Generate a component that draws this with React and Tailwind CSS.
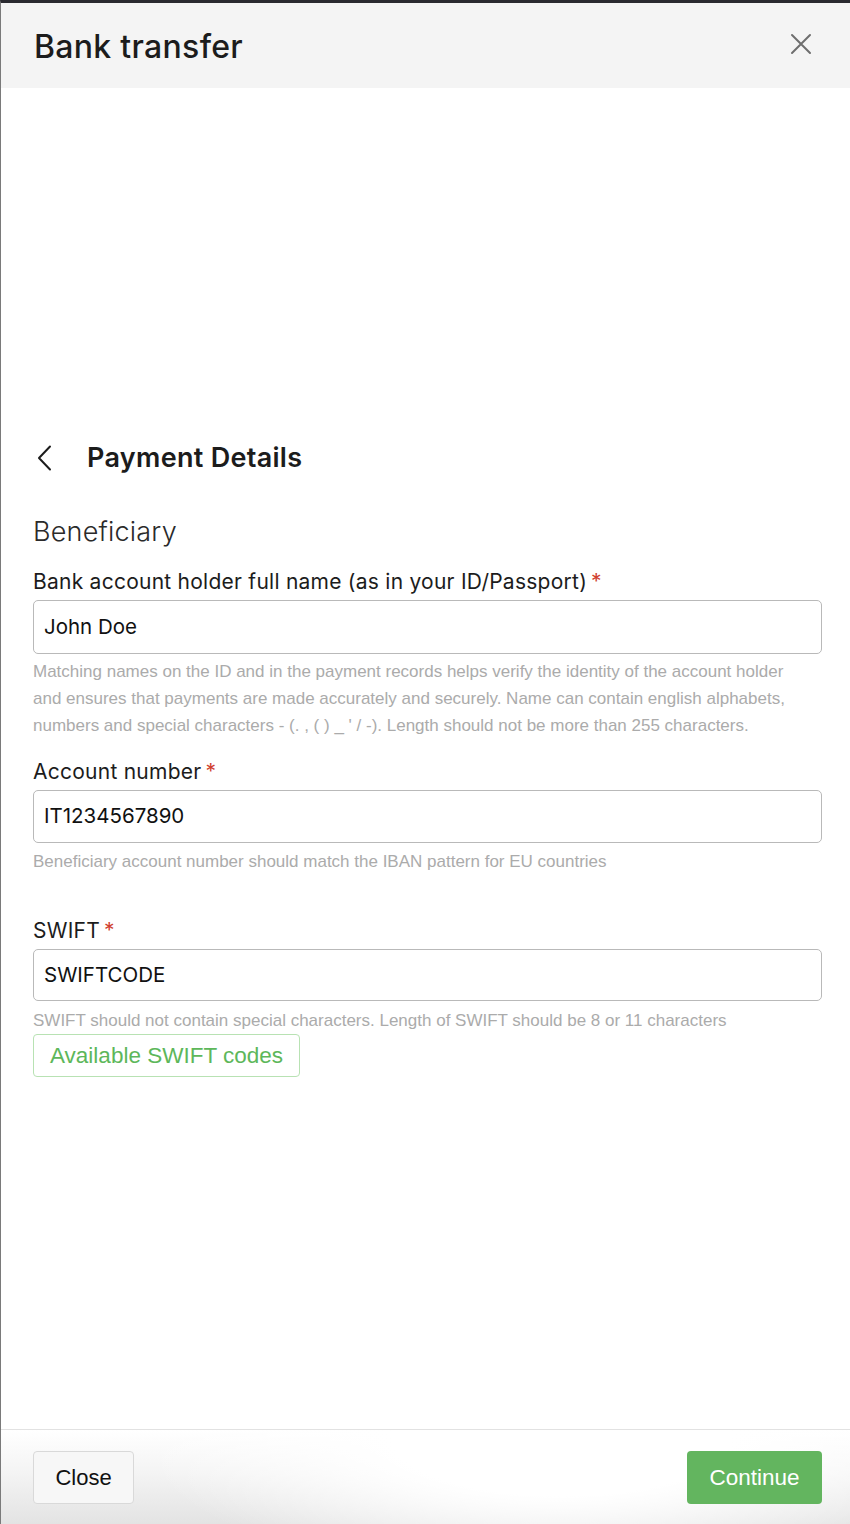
import React from "react";

const font = { fontFamily: "Inter, 'Noto Sans', sans-serif" };
const lib = { fontFamily: "'Liberation Sans', Arial, sans-serif" };

function Label({ children }) {
  return (
    <div className="text-[21px] leading-[28px] tracking-[0.25px] text-[#1c1c1c]">
      {children}
      <span className="text-[#d0402f] ml-[4px]">*</span>
    </div>
  );
}

function Input({ value, h }) {
  return (
    <div
      className={`mt-[4px] ${h} w-full rounded-[5px] border border-[#b9b9b9] bg-white flex items-center px-[10px] text-[20.5px] text-[#111]`}
      style={font}
    >
      {value}
    </div>
  );
}

function Helper({ children, className = "" }) {
  return (
    <div className={`text-[17px] leading-[27px] text-[#ababab] ${className}`} style={lib}>
      {children}
    </div>
  );
}

export default function App() {
  return (
    <div
      className="w-[850px] h-[1524px] flex flex-col bg-white border-t-[3px] border-t-[#2a2a30] border-l border-l-[#7a7a7a] overflow-hidden"
      style={font}
    >
      <header className="h-[85px] shrink-0 bg-[#f4f4f4] flex items-center justify-between pl-[33px] pr-[38px]">
        <h1 className="text-[32px] font-medium text-[#1c1c1c] tracking-[0.3px] pt-[2px]">Bank transfer</h1>
        <svg width="22" height="22" viewBox="0 0 22 22" className="mt-[-4px]">
          <path d="M2 2 L20 20 M20 2 L2 20" stroke="#6e6e6e" strokeWidth="2" strokeLinecap="round" />
        </svg>
      </header>

      <main className="flex-1 pl-[32px] pr-[28px] pt-[352px]">
        <div className="flex items-center h-[36px]">
          <svg width="16" height="26" viewBox="0 0 16 26" className="ml-[4px]">
            <path d="M13 1.5 L2 13 L13 24.5" stroke="#1c1c1c" strokeWidth="2" fill="none" strokeLinecap="round" strokeLinejoin="round" />
          </svg>
          <h2 className="ml-[34px] text-[27px] font-semibold tracking-[0.3px] text-[#1c1c1c]">Payment Details</h2>
        </div>

        <div className="mt-[38px] text-[27px] leading-[36px] tracking-[0.2px] text-[#2a2a2a] font-light">Beneficiary</div>

        <div className="mt-[18px]">
          <Label>Bank account holder full name (as in your ID/Passport)</Label>
          <Input value="John Doe" h="h-[54px]" />
          <Helper className="mt-[4px] max-w-[768px]">
            Matching names on the ID and in the payment records helps verify the identity of the account holder and ensures that payments are made accurately and securely. Name can contain english alphabets, numbers and special characters - (. , ( ) _ ' / -). Length should not be more than 255 characters.
          </Helper>
        </div>

        <div className="mt-[19px]">
          <Label>Account number</Label>
          <Input value="IT1234567890" h="h-[53px]" />
          <Helper className="mt-[5px]">Beneficiary account number should match the IBAN pattern for EU countries</Helper>
        </div>

        <div className="mt-[42px]">
          <Label>SWIFT</Label>
          <Input value="SWIFTCODE" h="h-[52px]" />
          <Helper className="mt-[6px] leading-[20px]">SWIFT should not contain special characters. Length of SWIFT should be 8 or 11 characters</Helper>
          <button
            className="mt-[0px] h-[43px] px-[16px] rounded-[4px] border border-[#b8e2b3] text-[#5db75a] text-[22.5px] bg-white"
            style={lib}
          >
            Available SWIFT codes
          </button>
        </div>
      </main>

      <footer
        className="h-[95px] shrink-0 border-t border-t-[#e2e2e2] flex items-start justify-between pl-[32px] pr-[28px] pt-[21px]"
        style={{
          background:
            "radial-gradient(ellipse 420px 140px at 560px 10px, #ffffff 40%, rgba(255,255,255,0) 100%), linear-gradient(180deg, #ffffff 0%, #f4f4f4 45%, #e3e3e3 100%)",
        }}
      >
        <button
          className="h-[53px] w-[101px] rounded-[4px] border border-[#d9d9d9] bg-[#f7f7f7] text-[22px] text-[#111]"
          style={lib}
        >
          Close
        </button>
        <button className="h-[53px] w-[135px] rounded-[4px] bg-[#63b55f] text-[22.5px] text-white" style={lib}>
          Continue
        </button>
      </footer>
    </div>
  );
}
